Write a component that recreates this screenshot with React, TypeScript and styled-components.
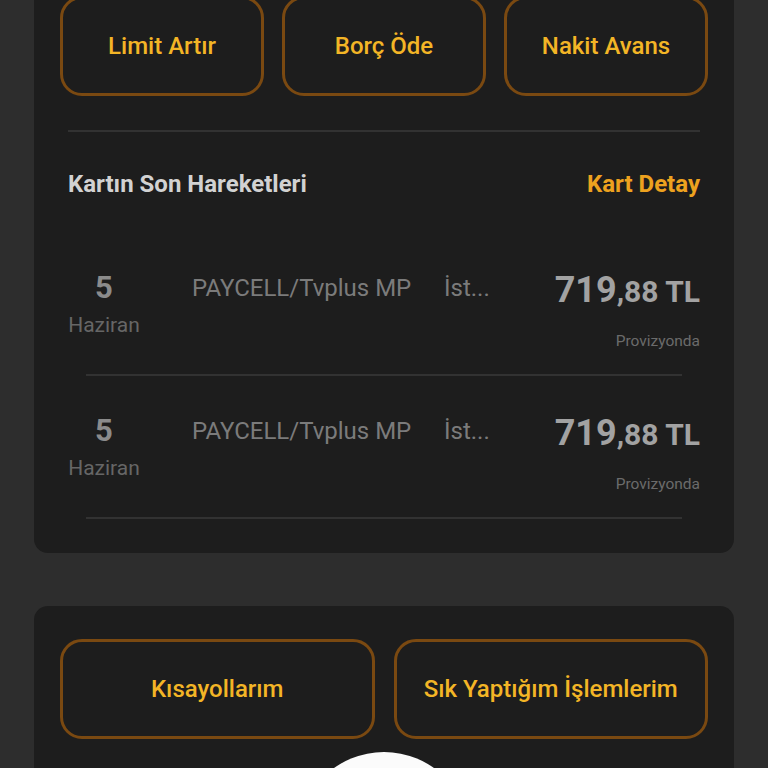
import styled, { createGlobalStyle } from "styled-components";

const GlobalStyle = createGlobalStyle`
  html, body {
    margin: 0;
    padding: 0;
    background: #2d2d2d;
    font-family: Roboto, "Noto Sans", "Liberation Sans", sans-serif;
    overflow: hidden;
  }
`;

const Page = styled.div`
  width: 768px;
  height: 768px;
  padding: 0 34px;
  box-sizing: border-box;
  overflow: hidden;
  position: relative;
`;

const Card = styled.section<{ $first?: boolean }>`
  background: #1d1d1d;
  border-radius: 14px;
  margin-top: ${p => (p.$first ? "-30px" : "53px")};
  padding: ${p => (p.$first ? "26px 26px 34px" : "33px 26px 60px")};
`;

const ButtonRow = styled.div<{ $cols: number }>`
  display: grid;
  grid-template-columns: repeat(${p => p.$cols}, 1fr);
  gap: ${p => (p.$cols === 3 ? "18px" : "19px")};
`;

const ActionButton = styled.button`
  height: 100px;
  background: transparent;
  border: 3px solid #7a4911;
  border-radius: 22px;
  color: #f3b526;
  font-family: Roboto, "Noto Sans", sans-serif;
  font-size: 24px;
  font-weight: 500;
  cursor: pointer;
`;

const Divider = styled.hr<{ $inset: number }>`
  border: none;
  height: 2px;
  background: #323232;
  margin: 0 ${p => p.$inset}px;
`;

const TopDivider = styled(Divider)`
  margin-top: 34px;
`;

const Header = styled.div`
  display: flex;
  justify-content: space-between;
  align-items: center;
  margin: 38px 8px 35px;
  line-height: 28px;
  font-size: 24px;
  font-weight: 700;
`;

const Title = styled.span`
  color: #d2d2d2;
`;

const Link = styled.span`
  color: #eda21f;
`;

const TxRow = styled.div`
  display: grid;
  grid-template-columns: 72px 52px 252px 1fr auto;
  align-items: start;
  margin: 0 8px;
  padding: 39px 0 24px;
`;

const DateCol = styled.div`
  grid-column: 1;
  display: flex;
  flex-direction: column;
  align-items: center;
`;

const Day = styled.span`
  font-size: 31px;
  font-weight: 700;
  line-height: 32px;
  color: #8b8b8b;
`;

const Month = styled.span`
  margin-top: 9px;
  font-size: 21px;
  line-height: 24px;
  color: #666666;
`;

const Merchant = styled.span`
  grid-column: 3;
  font-size: 24px;
  line-height: 32px;
  color: #7b7b7b;
  white-space: nowrap;
`;

const City = styled.span`
  grid-column: 4;
  font-size: 24px;
  line-height: 32px;
  color: #7b7b7b;
`;

const AmountCol = styled.div`
  grid-column: 5;
  display: flex;
  flex-direction: column;
  align-items: flex-end;
`;

const Amount = styled.div`
  display: flex;
  align-items: baseline;
  height: 36px;
  font-weight: 700;
  color: #a2a2a2;
  font-size: 30px;
  line-height: 36px;
  white-space: nowrap;
`;

const Whole = styled.span`
  font-size: 36px;
`;

const Status = styled.span`
  margin-top: 24px;
  font-size: 15.5px;
  line-height: 18px;
  color: #6b6b6b;
`;

const Fab = styled.div`
  position: absolute;
  left: 298px;
  top: 752px;
  width: 172px;
  height: 172px;
  border-radius: 50%;
  background: #fbfbfb;
`;

const transactions = [
  { day: "5", month: "Haziran", merchant: "PAYCELL/Tvplus MP", city: "İst...", whole: "719", frac: ",88 TL" },
  { day: "5", month: "Haziran", merchant: "PAYCELL/Tvplus MP", city: "İst...", whole: "719", frac: ",88 TL" },
];

export default function App() {
  return (
    <>
      <GlobalStyle />
      <Page>
        <Card $first>
          <ButtonRow $cols={3}>
            <ActionButton>Limit Artır</ActionButton>
            <ActionButton>Borç Öde</ActionButton>
            <ActionButton>Nakit Avans</ActionButton>
          </ButtonRow>
          <TopDivider $inset={8} />
          <Header>
            <Title>Kartın Son Hareketleri</Title>
            <Link>Kart Detay</Link>
          </Header>
          {transactions.map((t, i) => (
            <div key={i}>
              <TxRow>
                <DateCol>
                  <Day>{t.day}</Day>
                  <Month>{t.month}</Month>
                </DateCol>
                <Merchant>{t.merchant}</Merchant>
                <City>{t.city}</City>
                <AmountCol>
                  <Amount>
                    <Whole>{t.whole}</Whole>
                    {t.frac}
                  </Amount>
                  <Status>Provizyonda</Status>
                </AmountCol>
              </TxRow>
              <Divider $inset={26} />
            </div>
          ))}
        </Card>
        <Card>
          <ButtonRow $cols={2}>
            <ActionButton>Kısayollarım</ActionButton>
            <ActionButton>Sık Yaptığım İşlemlerim</ActionButton>
          </ButtonRow>
        </Card>
        <Fab />
      </Page>
    </>
  );
}
